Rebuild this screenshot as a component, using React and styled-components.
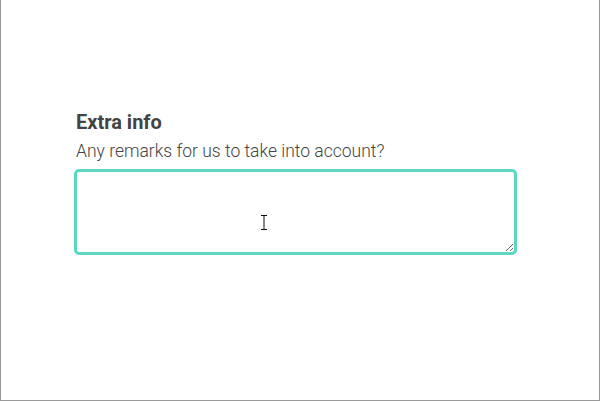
import React from 'react'
import styled, { createGlobalStyle } from 'styled-components'

const GlobalStyle = createGlobalStyle`
  html, body { margin: 0; padding: 0; background: #fff; }
  body { font-family: Roboto, "Noto Sans", sans-serif; }
`

const Frame = styled.div`
  box-sizing: border-box;
  width: 600px;
  height: 401px;
  border: 1px solid #9a9a9a;
  border-top: none;
  padding: 110px 82px 0 73px;
  position: relative;
`

const Field = styled.div`
  display: flex;
  flex-direction: column;
  align-items: flex-start;
`

const Title = styled.label`
  font-weight: 700;
  font-size: 20px;
  line-height: 24px;
  color: #444;
  padding-left: 2px;
`

const Hint = styled.div`
  font-weight: 300;
  font-size: 17.5px;
  line-height: 24px;
  color: #444;
  padding-left: 2px;
  margin: 5px 0 6px;
`

const Area = styled.textarea`
  box-sizing: border-box;
  display: block;
  margin: 0;
  width: 443px;
  height: 86px;
  border: 3px solid #5ed6c1;
  border-radius: 5px;
  outline: none;
  font-family: inherit;
  font-size: 16px;
  resize: vertical;
  padding: 8px;
`

const Cursor = styled.svg`
  position: absolute;
  left: 259px;
  top: 214px;
  pointer-events: none;
`

export default function App() {
  return (
    <>
      <GlobalStyle />
      <Frame>
        <Field>
          <Title>Extra info</Title>
          <Hint>Any remarks for us to take into account?</Hint>
          <Area />
        </Field>
        <Cursor width="8" height="17" viewBox="0 0 8 17">
          <path d="M1 1.5h6M4 2v13M1 15.5h6" stroke="#111" strokeWidth="1" fill="none" />
        </Cursor>
      </Frame>
    </>
  )
}
